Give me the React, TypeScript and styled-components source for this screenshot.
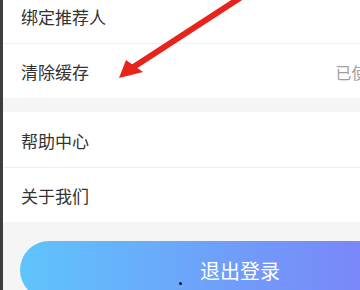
import React from 'react';
import styled, {createGlobalStyle} from 'styled-components';

const GlobalStyle = createGlobalStyle`
    html, body {
        margin: 0;
        padding: 0;
        width: 360px;
        height: 290px;
        overflow: hidden;
        background: #f5f5f5;
        font-family: "Noto Sans CJK SC", "Noto Sans", sans-serif;
    }
`

const groups = [
    [{title: '绑定推荐人'}, {title: '清除缓存', value: '已使用0.52MB'}],
    [{title: '帮助中心'}, {title: '关于我们'}],
]

export default function App() {
    return (
        <>
            <GlobalStyle/>
            <Screen>
                <Edge/>
                <Page>
                    {groups.map((group, gi) => (
                        <Group key={gi}>
                            {group.map((item, i) => (
                                <Row key={item.title} divided={i > 0}>
                                    <Title>{item.title}</Title>
                                    {item.value && <Value>{item.value}</Value>}
                                </Row>
                            ))}
                        </Group>
                    ))}
                    <LogoutButton>退出登录</LogoutButton>
                </Page>
                <Dot/>
                <Arrow viewBox="0 0 360 290" width="360" height="290">
                    <line x1="246" y1="-6" x2="132" y2="68" stroke="#e8231c" strokeWidth="6" strokeLinecap="round"/>
                    <polygon points="119,78 126,60 143,72" fill="#e8231c"/>
                </Arrow>
            </Screen>
        </>
    );
}

const Screen = styled.div`
    position: relative;
    display: flex;
    width: 360px;
    height: 290px;
    overflow: hidden;
`

const Edge = styled.div`
    flex: 0 0 3px;
    background: #3e3e3e;
`

const Page = styled.div`
    flex: 1;
    min-width: 0;
    display: flex;
    flex-direction: column;
    gap: 14px;
    margin-top: -12px;
    background: #f5f5f5;
`

const Group = styled.div`
    background: #fff;
`

const Row = styled.div<{divided?: boolean}>`
    height: 55px;
    display: flex;
    align-items: center;
    padding: 1px 0 0 18px;
    box-sizing: border-box;
    white-space: nowrap;
    overflow: hidden;
    border-top: ${p => p.divided ? '1px solid #f0f0f0' : 'none'};
`

const Title = styled.span`
    font-size: 17px;
    color: #333;
`

const Value = styled.span`
    flex-shrink: 0;
    margin-left: auto;
    margin-right: -78px;
    font-size: 16px;
    color: #a0a0a0;
`

const LogoutButton = styled.div`
    flex: 0 0 58px;
    width: 440px;
    margin: 5px 0 0 17px;
    border-radius: 29px;
    background: linear-gradient(90deg, #5fc4fc 0%, #7a86f8 78%, #7f78f8 100%);
    color: #fff;
    font-size: 20px;
    display: flex;
    align-items: center;
    justify-content: center;
`

const Dot = styled.div`
    position: absolute;
    left: 179px;
    top: 282px;
    width: 3px;
    height: 3px;
    border-radius: 50%;
    background: #111;
`

const Arrow = styled.svg`
    position: absolute;
    left: 0;
    top: 0;
    pointer-events: none;
`
